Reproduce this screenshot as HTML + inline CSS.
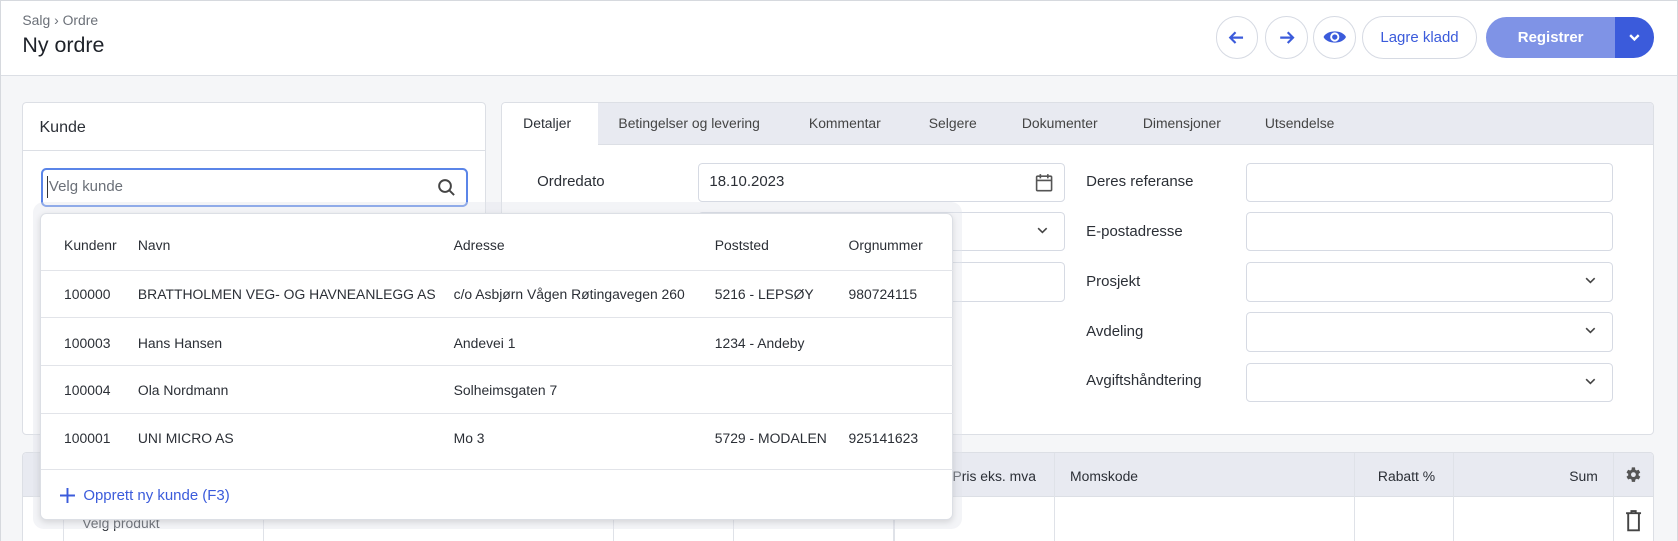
<!DOCTYPE html>
<html><head><meta charset="utf-8"><style>
*{box-sizing:border-box;margin:0;padding:0}
html,body{width:1678px;height:541px;overflow:hidden;background:#f5f6f8}
#w{zoom:1.0702;width:1568px;height:506px;position:relative;font-family:"Liberation Sans",sans-serif;color:#2b2f36;font-size:14px;border:1px solid #d6d9de;background:#f5f6f8}
.a{position:absolute}
.hdr{left:0;top:0;width:1566px;height:70px;background:#fff;border-bottom:1px solid #dcdfe5}
.circ{width:40px;height:40px;border:1px solid #d6dae3;border-radius:50%;background:#fff;top:14px;display:flex;align-items:center;justify-content:center}
.card{background:#fff;border:1px solid #dcdfe5;border-radius:4px}
.inp{background:#fff;border:1px solid #d6dae3;border-radius:4px;height:37px}
.lbl{font-size:14px;color:#2b2f36}
.chev{position:absolute;right:14px;top:12px}
.th{font-size:13px;color:#2b2f36}
.row{position:absolute;left:0;width:853px;border-top:1px solid #e2e4e9}
.cell{position:absolute;font-size:13px;color:#2b2f36}
.vl{position:absolute;top:0;bottom:0;width:1px;background:#dfe2e8}
</style></head><body><div id="w">
<div class="a hdr">
 <div class="a" style="left:20px;top:10px;font-size:13px;color:#6b7078">Salg › Ordre</div>
 <div class="a" style="left:20px;top:30px;font-size:20px;color:#1e2229">Ny ordre</div>
 <div class="a circ" style="left:1135px"><svg width="18" height="18" viewBox="0 0 18 18" fill="none" stroke="#3b5bdb" stroke-width="2"><path d="M15 9H3M8 4L3 9l5 5"/></svg></div>
 <div class="a circ" style="left:1181px"><svg width="18" height="18" viewBox="0 0 18 18" fill="none" stroke="#3b5bdb" stroke-width="2"><path d="M3 9h12M10 4l5 5-5 5"/></svg></div>
 <div class="a circ" style="left:1226px"><svg width="22" height="15" viewBox="0 0 22 15"><path d="M0.5 7.5C4 0.5 18 0.5 21.5 7.5C18 14.5 4 14.5 0.5 7.5Z" fill="#3b5bdb"/><circle cx="11" cy="7.5" r="4.3" fill="#fff"/><circle cx="11" cy="7.5" r="2.5" fill="#3b5bdb"/></svg></div>
 <div class="a" style="left:1272px;top:14px;width:107px;height:40px;border:1px solid #d6dae3;border-radius:20px;color:#3b5bdb;font-size:14px;display:flex;align-items:center;justify-content:center">Lagre kladd</div>
 <div class="a" style="left:1388px;top:15px;width:120px;height:38px;background:#7f93e6;border-radius:19px 0 0 19px;color:#fff;font-weight:bold;font-size:14px;display:flex;align-items:center;justify-content:center">Registrer</div>
 <div class="a" style="left:1508px;top:15px;width:37px;height:38px;background:#3b5bdb;border-radius:0 19px 19px 0;display:flex;align-items:center;justify-content:center"><svg width="12" height="8" viewBox="0 0 12 8" fill="none" stroke="#fff" stroke-width="2.2"><path d="M2 2l4 4 4-4"/></svg></div>
</div>

<div class="a card" style="left:20px;top:94px;width:433px;height:312px">
 <div class="a" style="left:0;top:0;width:431px;height:45px;border-bottom:1px solid #dcdfe5"></div>
 <div class="a" style="left:15px;top:14px;font-size:15px">Kunde</div>
 <div class="a" style="left:16px;top:61px;width:399px;height:37px;border:2px solid #5b85e8;border-radius:5px">
  <div class="a" style="left:4px;top:6px;width:1px;height:20px;background:#333"></div>
  <div class="a" style="left:6px;top:8px;font-size:14px;color:#6b7078">Velg kunde</div>
  <svg class="a" style="right:9px;top:8px" width="18" height="18" viewBox="0 0 18 18" fill="none" stroke="#444" stroke-width="1.8"><circle cx="7.5" cy="7.5" r="5.5"/><path d="M11.5 11.5L16 16"/></svg>
 </div>
</div>

<div class="a card" style="left:467px;top:94px;width:1078px;height:312px;overflow:hidden">
 <div class="a" style="left:0;top:0;width:1078px;height:40px;background:#e8eaf1;border-bottom:1px solid #dcdfe5"></div>
 <div class="a" style="left:0;top:0;width:90px;height:41px;background:#fff"></div>
 <div class="a" style="left:20px;top:12px;font-size:13px">Detaljer</div>
 <div class="a" style="left:109px;top:12px;font-size:13px;color:#444">Betingelser og levering</div>
 <div class="a" style="left:287px;top:12px;font-size:13px;color:#444">Kommentar</div>
 <div class="a" style="left:399px;top:12px;font-size:13px;color:#444">Selgere</div>
 <div class="a" style="left:486px;top:12px;font-size:13px;color:#444">Dokumenter</div>
 <div class="a" style="left:599px;top:12px;font-size:13px;color:#444">Dimensjoner</div>
 <div class="a" style="left:713px;top:12px;font-size:13px;color:#444">Utsendelse</div>
</div>
<div class="a lbl" style="left:501px;top:161px">Ordredato</div>
<div class="a inp" style="left:651px;top:151px;width:343px"><span class="a" style="left:10px;top:9px">18.10.2023</span>
 <svg class="a" style="right:10px;top:9px" width="17" height="18" viewBox="0 0 17 18" fill="none" stroke="#555" stroke-width="1.5"><rect x="1.5" y="3" width="14" height="13.5" rx="1"/><path d="M1.5 7h14M5 1v4M12 1v4"/></svg></div>
<div class="a inp" style="left:651px;top:197px;width:343px"><svg class="chev" width="12" height="8" viewBox="0 0 12 8" fill="none" stroke="#444" stroke-width="1.5"><path d="M2 2l4 4 4-4"/></svg></div>
<div class="a inp" style="left:651px;top:244px;width:343px"></div>

<div class="a lbl" style="left:1014px;top:161px">Deres referanse</div>
<div class="a inp" style="left:1163px;top:151px;width:343px"></div>
<div class="a lbl" style="left:1014px;top:207px">E-postadresse</div>
<div class="a inp" style="left:1163px;top:197px;width:343px"></div>
<div class="a lbl" style="left:1014px;top:254px">Prosjekt</div>
<div class="a inp" style="left:1163px;top:244px;width:343px"><svg class="chev" width="12" height="8" viewBox="0 0 12 8" fill="none" stroke="#444" stroke-width="1.5"><path d="M2 2l4 4 4-4"/></svg></div>
<div class="a lbl" style="left:1014px;top:301px">Avdeling</div>
<div class="a inp" style="left:1163px;top:291px;width:343px"><svg class="chev" width="12" height="8" viewBox="0 0 12 8" fill="none" stroke="#444" stroke-width="1.5"><path d="M2 2l4 4 4-4"/></svg></div>
<div class="a lbl" style="left:1014px;top:347px">Avgiftshåndtering</div>
<div class="a inp" style="left:1163px;top:338px;width:343px"><svg class="chev" width="12" height="8" viewBox="0 0 12 8" fill="none" stroke="#444" stroke-width="1.5"><path d="M2 2l4 4 4-4"/></svg></div>

<div class="a card" style="left:20px;top:421px;width:1525px;height:90px;overflow:hidden">
 <div class="a" style="left:0;top:0;width:1525px;height:42px;background:#e8eaf1;border-bottom:1px solid #dcdfe5"></div>
 <div class="vl" style="left:37px"></div><div class="vl" style="left:224px"></div><div class="vl" style="left:551px"></div><div class="vl" style="left:663px"></div><div class="vl" style="left:813px"></div><div class="vl" style="left:963px"></div><div class="vl" style="left:1243px"></div><div class="vl" style="left:1336px"></div><div class="vl" style="left:1485px"></div>
 <div class="a th" style="right:577px;top:14px">Pris eks. mva</div>
 <div class="a th" style="left:978px;top:14px">Momskode</div>
 <div class="a th" style="right:204px;top:14px">Rabatt %</div>
 <div class="a th" style="right:52px;top:14px">Sum</div>
 <svg class="a" style="left:1495px;top:12px" width="18" height="18" viewBox="0 0 24 24"><path fill="#555" d="M19.4 13a7.5 7.5 0 000-2l2.1-1.6-2-3.5-2.5 1a7 7 0 00-1.7-1L15 3h-4l-.4 2.9a7 7 0 00-1.7 1l-2.5-1-2 3.5L6.5 11a7.5 7.5 0 000 2l-2.1 1.6 2 3.5 2.5-1a7 7 0 001.7 1L11 21h4l.4-2.9a7 7 0 001.7-1l2.5 1 2-3.5z"/><circle cx="13" cy="12" r="3" fill="#e8eaf1"/></svg>
 <div class="a th" style="left:55px;top:58px">Velg produkt</div>
 <svg class="a" style="left:1497px;top:54px" width="16" height="20" viewBox="0 0 16 20" fill="none" stroke="#444" stroke-width="1.8"><path d="M1 3h14M6 3V1h4v2M3 3v16h10V3"/></svg>
</div>

<div class="a" style="left:30px;top:188px;width:868px;height:305px;background:rgba(225,228,235,.4);border-radius:10px"></div>
<div class="a" style="left:36px;top:198px;width:854px;height:287px;background:#fff;border:1px solid #dcdfe5;border-radius:6px;box-shadow:0 2px 6px rgba(0,0,0,.12)">
 <div class="cell th" style="left:22px;top:22px">Kundenr</div>
 <div class="cell th" style="left:91px;top:22px">Navn</div>
 <div class="cell th" style="left:386px;top:22px">Adresse</div>
 <div class="cell th" style="left:630px;top:22px">Poststed</div>
 <div class="cell th" style="left:755px;top:22px">Orgnummer</div>
 <div class="row" style="top:52px"></div>
 <div class="cell" style="left:22px;top:67px">100000</div><div class="cell" style="left:91px;top:67px">BRATTHOLMEN VEG- OG HAVNEANLEGG AS</div><div class="cell" style="left:386px;top:67px">c/o Asbjørn Vågen Røtingavegen 260</div><div class="cell" style="left:630px;top:67px">5216 - LEPSØY</div><div class="cell" style="left:755px;top:67px">980724115</div>
 <div class="row" style="top:96px"></div>
 <div class="cell" style="left:22px;top:113px">100003</div><div class="cell" style="left:91px;top:113px">Hans Hansen</div><div class="cell" style="left:386px;top:113px">Andevei 1</div><div class="cell" style="left:630px;top:113px">1234 - Andeby</div>
 <div class="row" style="top:141px"></div>
 <div class="cell" style="left:22px;top:157px">100004</div><div class="cell" style="left:91px;top:157px">Ola Nordmann</div><div class="cell" style="left:386px;top:157px">Solheimsgaten 7</div>
 <div class="row" style="top:186px"></div>
 <div class="cell" style="left:22px;top:202px">100001</div><div class="cell" style="left:91px;top:202px">UNI MICRO AS</div><div class="cell" style="left:386px;top:202px">Mo 3</div><div class="cell" style="left:630px;top:202px">5729 - MODALEN</div><div class="cell" style="left:755px;top:202px">925141623</div>
 <div class="row" style="top:238px"></div>
 <svg class="a" style="left:18px;top:256px" width="14" height="14" viewBox="0 0 14 14" stroke="#3b5bdb" stroke-width="1.8"><path d="M7 0v14M0 7h14"/></svg>
 <div class="cell" style="left:40px;top:255px;font-size:14px;color:#3b5bdb">Opprett ny kunde (F3)</div>
</div>
</div></body></html>
